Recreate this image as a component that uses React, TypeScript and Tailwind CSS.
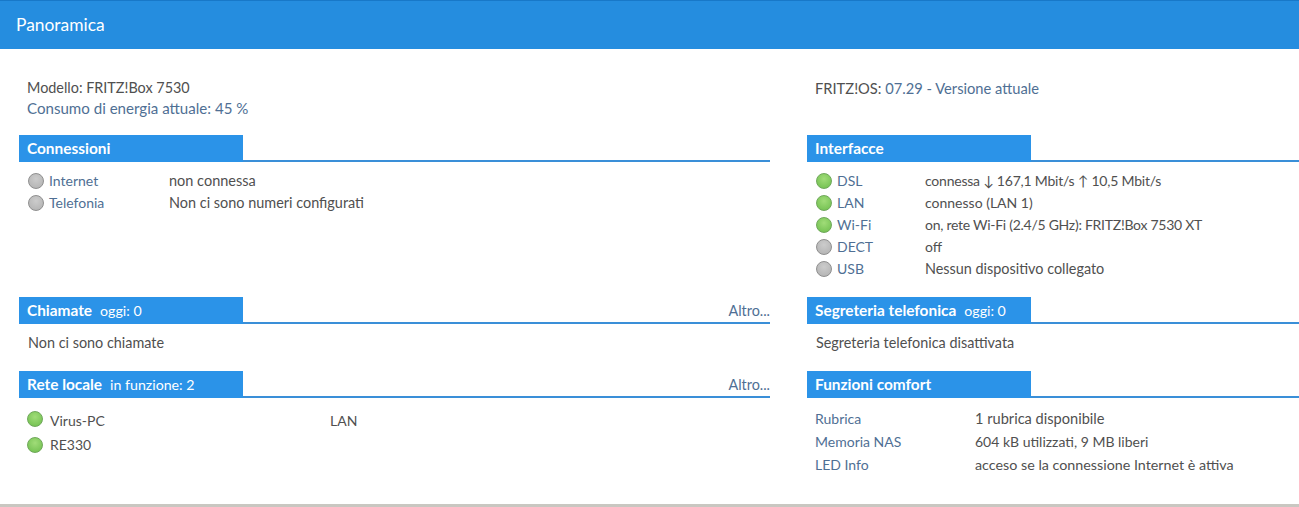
const font = "font-['Lato','Noto_Sans',sans-serif]"
const link = 'text-[#4f6f94]'

function Led({ on, className = '' }: { on?: boolean; className?: string }) {
  return (
    <span
      className={
        (on
          ? 'border-[#6fa85a] bg-[radial-gradient(circle_at_50%_35%,#a0dc78,#6dbd4c)] '
          : 'border-[#8f8f8f] bg-[radial-gradient(circle_at_50%_35%,#cccccc,#b0b0b0)] ') +
        'w-4 h-4 shrink-0 rounded-full border ' +
        className
      }
    />
  )
}

function Head({ title, sub, more }: { title: string; sub?: string; more?: boolean }) {
  return (
    <div className="flex items-end justify-between h-[27px] border-b-2 border-[#3a8fd8] relative">
      <div className="absolute left-0 top-0 w-[224px] h-[27px] bg-[#2b93e8] text-white flex items-center pl-2 gap-2">
        <span className="text-[15.4px] font-bold">{title}</span>
        {sub && <span className="text-[14.2px]">{sub}</span>}
      </div>
      <span />
      {more && <a className={`text-[14.4px] ${link} mb-[1px] leading-5`}>Altro...</a>}
    </div>
  )
}

function StatusRow({ on, name, value, w, size }: { on?: boolean; name: string; value: string; w: string; size: string }) {
  return (
    <div className="flex items-center h-[22px] pl-[9px] text-sm">
      <Led on={on} />
      <span className={`${w} pl-[5px] ${link}`}>{name}</span>
      <span className={size}>{value}</span>
    </div>
  )
}

export default function App() {
  return (
    <div className={`${font} w-[1299px] h-[507px] bg-white overflow-hidden flex flex-col text-[#505050]`}>
      <div className="h-[49px] shrink-0 bg-[#258ddf] border-t border-[#1878c8] flex items-center pl-4 pt-[1px] text-white text-[17.4px]">
        Panoramica
      </div>
      <div className="flex-1 grid grid-cols-[751px_492px] gap-x-[37px] pl-[19px] grid-rows-[86px_162px_74px_133px]">
        <div className="pt-[29px] pl-2 leading-[20px]">
          <div className="text-[14.4px]">Modello: FRITZ!Box 7530</div>
          <div className={`text-[15.1px] ${link}`}>Consumo di energia attuale: 45 %</div>
        </div>
        <div className="pt-[29px] pl-2 text-[14.7px] leading-[20px]">
          FRITZ!OS: <span className={link}>07.29 - Versione attuale</span>
        </div>

        <div>
          <Head title="Connessioni" />
          <div className="pt-[8px]">
            <StatusRow name="Internet" value="non connessa" w="w-[125px]" size="text-[14.5px]" />
            <StatusRow name="Telefonia" value="Non ci sono numeri configurati" w="w-[125px]" size="text-[14.45px]" />
          </div>
        </div>
        <div>
          <Head title="Interfacce" />
          <div className="pt-[8px]">
            <StatusRow on name="DSL" value="connessa ↓ 167,1 Mbit/s ↑ 10,5 Mbit/s" w="w-[93px]" size="text-sm tracking-[-0.22px]" />
            <StatusRow on name="LAN" value="connesso (LAN 1)" w="w-[93px]" size="text-sm" />
            <StatusRow on name="Wi-Fi" value="on, rete Wi-Fi (2.4/5 GHz): FRITZ!Box 7530 XT" w="w-[93px]" size="text-sm tracking-[-0.27px]" />
            <StatusRow name="DECT" value="off" w="w-[93px]" size="text-sm" />
            <StatusRow name="USB" value="Nessun dispositivo collegato" w="w-[93px]" size="text-[14.4px]" />
          </div>
        </div>

        <div>
          <Head title="Chiamate" sub="oggi: 0" more />
          <div className="pl-[9px] pt-[9px] text-[14.4px] leading-5">Non ci sono chiamate</div>
        </div>
        <div>
          <Head title="Segreteria telefonica" sub="oggi: 0" />
          <div className="pl-[9px] pt-[9px] text-[14.4px] leading-5">Segreteria telefonica disattivata</div>
        </div>

        <div>
          <Head title="Rete locale" sub="in funzione: 2" more />
          <div className="pt-[11px] pl-2 text-sm">
            <div className="flex items-center h-[24px]">
              <Led on className="-translate-y-0.5" />
              <span className="w-[287px] pl-[7px]">Virus-PC</span>
              <span>LAN</span>
            </div>
            <div className="flex items-center h-[24px]">
              <Led on />
              <span className="pl-[7px]">RE330</span>
            </div>
          </div>
        </div>
        <div>
          <Head title="Funzioni comfort" />
          <div className="pt-[9px] pl-2">
            {[
              ['Rubrica', '1 rubrica disponibile', 'text-[14.6px]'],
              ['Memoria NAS', '604 kB utilizzati, 9 MB liberi', 'text-sm'],
              ['LED Info', 'acceso se la connessione Internet è attiva', 'text-[14.3px]'],
            ].map(([k, v, size]) => (
              <div key={k} className="flex items-center h-[23px]">
                <span className={`w-[160px] text-sm ${link}`}>{k}</span>
                <span className={size}>{v}</span>
              </div>
            ))}
          </div>
        </div>
      </div>
      <div className="h-[3px] shrink-0 bg-[#c9c7c1]" />
    </div>
  )
}
